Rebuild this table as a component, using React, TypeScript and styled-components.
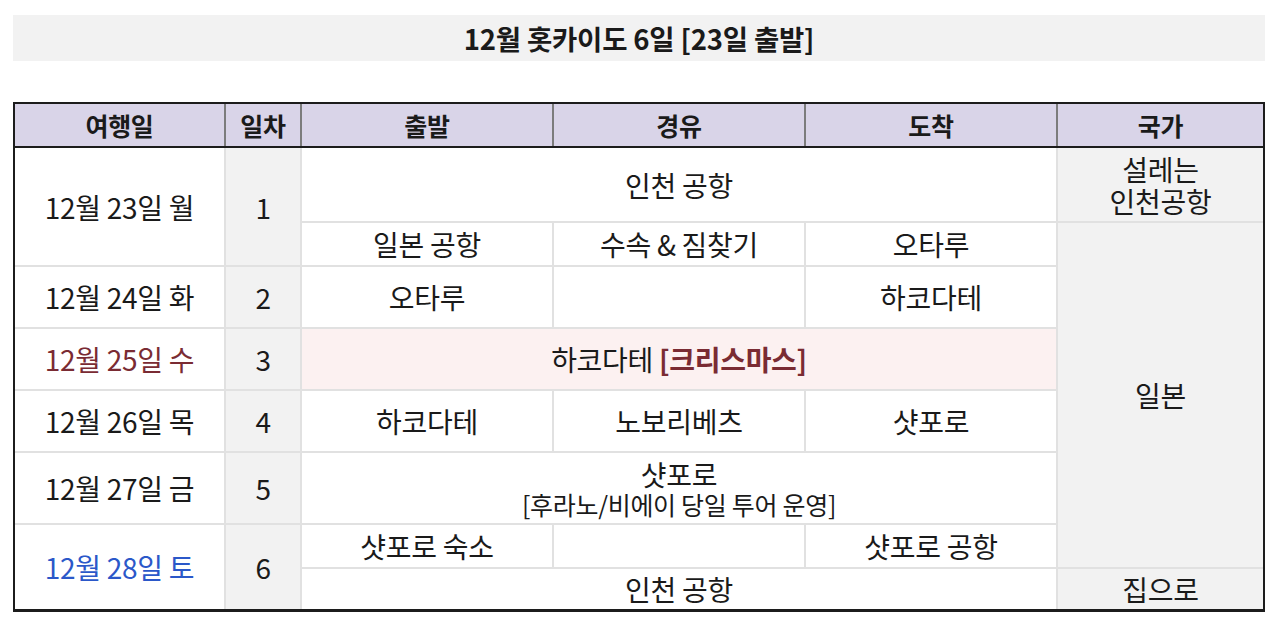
import { FC } from "react";
import styled, { createGlobalStyle } from "styled-components";

const GlobalStyle = createGlobalStyle`
  body {
    margin: 0;
    padding: 15px 15px 0 13px;
    background: #ffffff;
    font-family: "Noto Sans CJK KR", "Noto Sans", sans-serif;
    color: #1a1a1a;
  }
`;

const Page = styled.div`
  width: 1252px;
  display: flex;
  flex-direction: column;
  gap: 41px;
`;

const Title = styled.h1`
  margin: 0;
  height: 46px;
  background-color: #f2f2f2;
  display: flex;
  align-items: center;
  justify-content: center;
  font-size: 27.5px;
  font-weight: 700;
  letter-spacing: -0.2px;
`;

const Table = styled.div`
  border: 2px solid #1c1c1c;
  border-bottom-width: 3px;
`;

const columns = "209px 74px 250px 250px 250px 205px";

const Header = styled.div`
  display: grid;
  grid-template-columns: ${columns};
  gap: 2px;
  background-color: #7c7c7c;
  border-bottom: 2px solid #1c1c1c;
`;

const HeadCell = styled.div`
  height: 42px;
  background-color: #d9d4e8;
  display: flex;
  align-items: center;
  justify-content: center;
  font-size: 25px;
  font-weight: 700;
  letter-spacing: -0.3px;
`;

const Body = styled.div`
  display: grid;
  grid-template-columns: ${columns};
  grid-template-rows: 73px 42px 60px 60px 60px 70px 42px 40px;
  gap: 2px;
  background-color: #e1e1e1;
`;

type Tone = "plain" | "shade" | "holiday";

const toneBg: Record<Tone, string> = {
  plain: "#ffffff",
  shade: "#f2f2f2",
  holiday: "#fcf1f1",
};

const Cell = styled.div<{
  $col: number;
  $row: number;
  $colSpan?: number;
  $rowSpan?: number;
  $tone?: Tone;
  $color?: string;
}>`
  grid-column: ${(p) => p.$col} / span ${(p) => p.$colSpan ?? 1};
  grid-row: ${(p) => p.$row} / span ${(p) => p.$rowSpan ?? 1};
  background-color: ${(p) => toneBg[p.$tone ?? "plain"]};
  color: ${(p) => p.$color ?? "#1a1a1a"};
  display: flex;
  flex-direction: column;
  align-items: center;
  justify-content: center;
  text-align: center;
  font-size: 28px;
  line-height: 32px;
  letter-spacing: -0.3px;
  white-space: nowrap;
  overflow: hidden;
`;

const Mark = styled.b`
  color: #7a2b33;
  font-weight: 700;
`;

const Small = styled.span`
  font-size: 25px;
  line-height: 28px;
`;

const RED = "#7a2b33";
const BLUE = "#2b58c9";

const App: FC = () => {
  return (
    <>
      <GlobalStyle />
      <Page>
        <Title>12월 홋카이도 6일 [23일 출발]</Title>
        <Table>
          <Header>
            <HeadCell>여행일</HeadCell>
            <HeadCell>일차</HeadCell>
            <HeadCell>출발</HeadCell>
            <HeadCell>경유</HeadCell>
            <HeadCell>도착</HeadCell>
            <HeadCell>국가</HeadCell>
          </Header>
          <Body>
            <Cell $col={1} $row={1} $rowSpan={2}>12월 23일 월</Cell>
            <Cell $col={2} $row={1} $rowSpan={2} $tone="shade">1</Cell>
            <Cell $col={3} $row={1} $colSpan={3}>인천 공항</Cell>
            <Cell $col={6} $row={1} $tone="shade">
              <span>설레는</span>
              <span>인천공항</span>
            </Cell>

            <Cell $col={3} $row={2}>일본 공항</Cell>
            <Cell $col={4} $row={2}>수속 &amp; 짐찾기</Cell>
            <Cell $col={5} $row={2}>오타루</Cell>
            <Cell $col={6} $row={2} $rowSpan={6} $tone="shade">일본</Cell>

            <Cell $col={1} $row={3}>12월 24일 화</Cell>
            <Cell $col={2} $row={3} $tone="shade">2</Cell>
            <Cell $col={3} $row={3}>오타루</Cell>
            <Cell $col={4} $row={3} />
            <Cell $col={5} $row={3}>하코다테</Cell>

            <Cell $col={1} $row={4} $color={RED}>12월 25일 수</Cell>
            <Cell $col={2} $row={4} $tone="shade">3</Cell>
            <Cell $col={3} $row={4} $colSpan={3} $tone="holiday">
              <span>
                하코다테 <Mark>[크리스마스]</Mark>
              </span>
            </Cell>

            <Cell $col={1} $row={5}>12월 26일 목</Cell>
            <Cell $col={2} $row={5} $tone="shade">4</Cell>
            <Cell $col={3} $row={5}>하코다테</Cell>
            <Cell $col={4} $row={5}>노보리베츠</Cell>
            <Cell $col={5} $row={5}>샷포로</Cell>

            <Cell $col={1} $row={6}>12월 27일 금</Cell>
            <Cell $col={2} $row={6} $tone="shade">5</Cell>
            <Cell $col={3} $row={6} $colSpan={3}>
              <span>샷포로</span>
              <Small>[후라노/비에이 당일 투어 운영]</Small>
            </Cell>

            <Cell $col={1} $row={7} $rowSpan={2} $color={BLUE}>12월 28일 토</Cell>
            <Cell $col={2} $row={7} $rowSpan={2} $tone="shade">6</Cell>
            <Cell $col={3} $row={7}>샷포로 숙소</Cell>
            <Cell $col={4} $row={7} />
            <Cell $col={5} $row={7}>샷포로 공항</Cell>

            <Cell $col={3} $row={8} $colSpan={3}>인천 공항</Cell>
            <Cell $col={6} $row={8} $tone="shade">집으로</Cell>
          </Body>
        </Table>
      </Page>
    </>
  );
};

export default App;
